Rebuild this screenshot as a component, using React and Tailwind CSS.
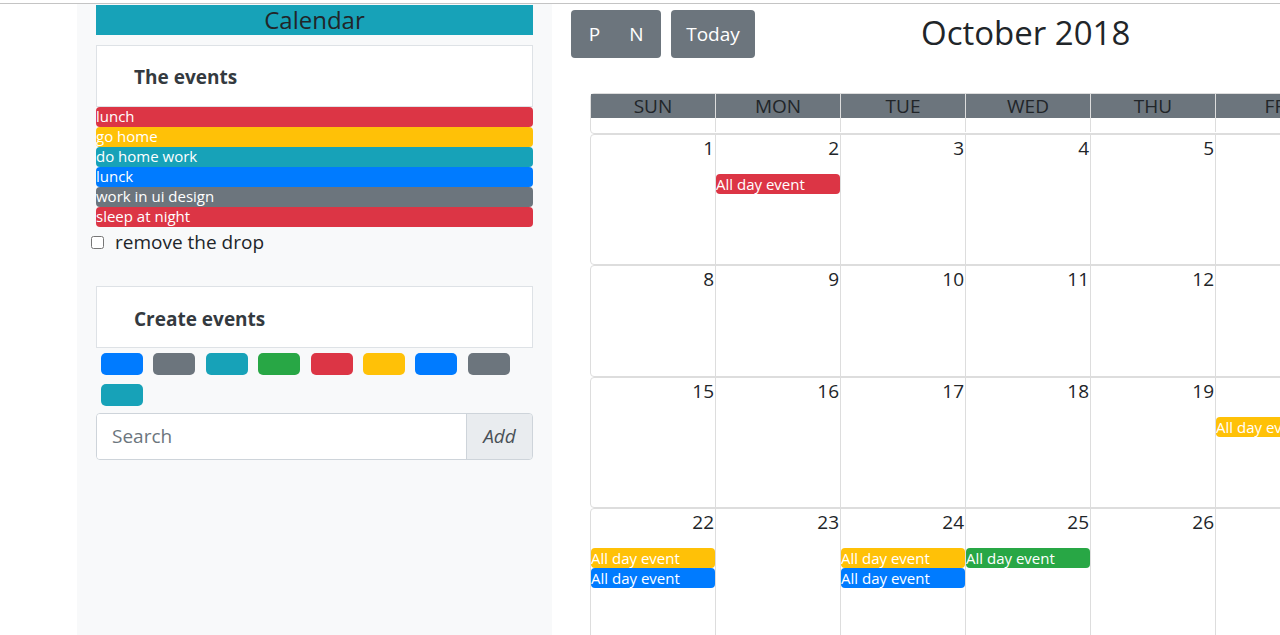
const sideEvents = [
  { title: "lunch", color: "bg-[#dc3545]" },
  { title: "go home", color: "bg-[#ffc107]" },
  { title: "do home work", color: "bg-[#17a2b8]" },
  { title: "lunck", color: "bg-[#007bff]" },
  { title: "work in ui design", color: "bg-[#6c757d]" },
  { title: "sleep at night", color: "bg-[#dc3545]" },
];

const swatches = [
  "bg-[#007bff]",
  "bg-[#6c757d]",
  "bg-[#17a2b8]",
  "bg-[#28a745]",
  "bg-[#dc3545]",
  "bg-[#ffc107]",
  "bg-[#007bff]",
  "bg-[#6c757d]",
  "bg-[#17a2b8]",
];

const days = ["Sun", "Mon", "Tue", "Wed", "Thu", "Fri", "Sat"];

// events keyed by day number
const calEvents = {
  2: ["bg-[#dc3545]"],
  20: ["bg-[#ffc107]"],
  22: ["bg-[#ffc107]", "bg-[#007bff]"],
  24: ["bg-[#ffc107]", "bg-[#007bff]"],
  25: ["bg-[#28a745]"],
};

const weeks = [
  { start: 1, height: "h-[131px]" },
  { start: 8, height: "h-[112px]" },
  { start: 15, height: "h-[131px]" },
  { start: 22, height: "h-[131px]" },
];

function Sidebar() {
  return (
    <aside className="w-[475px] shrink-0 bg-[#f8f9fa] px-[19px] pt-px">
      <h1 className="h-[30px] bg-[#17a2b8] text-center text-[24px] leading-[30px] text-[#212529]">Calendar</h1>

      <div className="mt-[10px] flex h-[62px] items-center border border-[#dee2e6] bg-white pl-[37px]">
        <h5 className="pt-[2px] text-[19px] font-bold text-[#343a40]">The events</h5>
      </div>
      <div>
        {sideEvents.map((ev) => (
          <div key={ev.title} className={`${ev.color} h-[20px] rounded-[4px] text-[15px] leading-[19px] text-white`}>
            {ev.title}
          </div>
        ))}
      </div>
      <label className="mt-[1px] flex items-center">
        <input type="checkbox" className="-ml-[5px] h-[13px] w-[13px]" />
        <span className="ml-[11px] text-[19px] leading-[28px] text-[#212529]">remove the drop</span>
      </label>

      <div className="mt-[30px] flex h-[62px] items-center border border-[#dee2e6] bg-white pl-[37px]">
        <h5 className="pt-[4px] text-[19px] font-bold text-[#343a40]">Create events</h5>
      </div>
      <div className="mt-[5px] flex flex-wrap gap-x-[10.4px] gap-y-[9px] px-[5px]">
        {swatches.map((c, i) => (
          <button key={i} type="button" className={`${c} h-[22px] w-[42px] rounded-[5px]`} />
        ))}
      </div>
      <div className="mt-[7px] flex h-[47px] overflow-hidden rounded-[4px] border border-[#ced4da]">
        <input
          placeholder="Search"
          className="min-w-0 flex-1 bg-white px-[15px] text-[19px] text-[#495057] placeholder:text-[#6c757d] outline-none"
        />
        <span className="flex w-[66px] items-center justify-center border-l border-[#ced4da] bg-[#e9ecef] text-[19px] italic text-[#495057]">
          Add
        </span>
      </div>
    </aside>
  );
}

function Week({ start, height }) {
  return (
    <div className={`${height} grid grid-cols-[124px_repeat(6,125px)] rounded-[4px] border border-[#ddd]`}>
      {days.map((d, i) => {
        const n = start + i;
        const evs = calEvents[n] || [];
        return (
          <div key={d} className={i > 0 ? "border-l border-[#ddd]" : ""}>
            <div className="pr-[1px] pt-[1px] text-right text-[19px] leading-[24px] text-[#212529]">{n}</div>
            <div className="mt-[14px]">
              {evs.map((c, k) => (
                <div key={k} className={`${c} h-[20px] rounded-[4px] text-[15px] leading-[20px] text-white`}>
                  All day event
                </div>
              ))}
            </div>
          </div>
        );
      })}
    </div>
  );
}

function CalendarView() {
  return (
    <main className="shrink-0 pl-[19px] pt-[6px]">
      <div className="flex items-center">
        <div className="flex h-[48px] overflow-hidden rounded-[4px] bg-[#6c757d] text-[19px] text-white">
          <button type="button" className="w-[45px] pl-[2px]">P</button>
          <button type="button" className="w-[45px] pr-[4px]">N</button>
        </div>
        <button type="button" className="ml-[10px] h-[48px] w-[84px] rounded-[4px] bg-[#6c757d] text-[19px] text-white">
          Today
        </button>
        <h2 className="mb-[2px] ml-[166px] text-[33px] font-medium leading-[46px] text-[#212529]">October 2018</h2>
      </div>

      <div className="ml-[19px] mt-[35px] w-[876px]">
        <div className="h-[41px] rounded-[4px] border border-[#ddd]">
          <div className="grid h-[24px] grid-cols-[124px_repeat(6,125px)] bg-[#6c757d]">
            {days.map((d, i) => (
              <div
                key={d}
                className={`text-center text-[19px] uppercase leading-[24px] text-[#212529] ${i > 0 ? "border-l border-[#ddd]" : ""}`}
              >
                {d}
              </div>
            ))}
          </div>
          <div className="grid h-[14px] grid-cols-[124px_repeat(6,125px)]">
            {days.map((d, i) => (
              <div key={d} className={i > 0 ? "border-l border-[#ddd]" : ""} />
            ))}
          </div>
        </div>
        {weeks.map((w) => (
          <Week key={w.start} start={w.start} height={w.height} />
        ))}
      </div>
    </main>
  );
}

export default function App() {
  return (
    <div className="h-[635px] w-[1280px] overflow-hidden bg-white font-['Open_Sans',sans-serif]">
      <div className="h-[3px]" />
      <div className="flex min-h-[631px] border-t border-[#c4c4c4] pl-[77px]">
        <Sidebar />
        <CalendarView />
      </div>
    </div>
  );
}
